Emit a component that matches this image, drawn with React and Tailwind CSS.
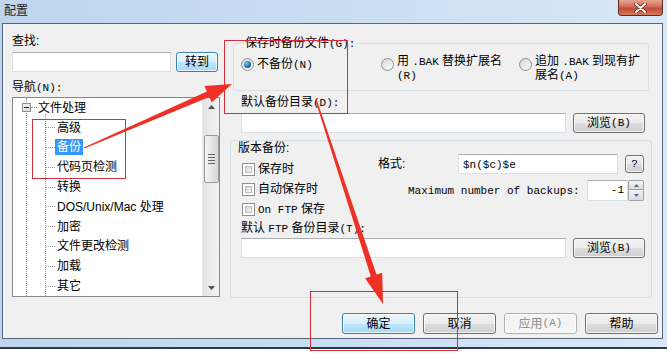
import React from "react";

const M = ({ children }) => (
  <span className="[font-family:Liberation_Mono,monospace] text-[11px]">{children}</span>
);

function Btn({ children, className = "", kind = "normal" }) {
  const k =
    kind === "blue"
      ? "border-[#3c7fb1] bg-[linear-gradient(#eaf6fd,#d9f0fc_50%,#bee6fd_50%,#a7d9f5)]"
      : kind === "disabled"
      ? "border-[#adb2b5] bg-[#f4f4f4] text-[#8a8a8a]"
      : "border-[#707070] bg-[linear-gradient(#f2f2f2,#ebebeb_50%,#dddddd_50%,#cfcfcf)]";
  return (
    <div
      className={`flex items-center justify-center rounded-[3px] border shadow-[inset_0_0_0_1px_rgba(255,255,255,0.75)] leading-none shrink-0 ${k} ${className}`}
    >
      {children}
    </div>
  );
}

const Check = () => (
  <div className="w-[13px] h-[13px] border border-[#8e8f8f] bg-white p-[2px] shrink-0">
    <div className="w-full h-full border border-[#b8bbbf] bg-[linear-gradient(135deg,#cfd2d7,#fbfbfb)]" />
  </div>
);

const Radio = ({ checked }) => (
  <div className="w-[13px] h-[13px] rounded-full border border-[#8e8f8f] bg-[linear-gradient(135deg,#d2d5da,#fdfdfd)] flex items-center justify-center shrink-0">
    {checked && (
      <div className="w-[7px] h-[7px] rounded-full bg-[radial-gradient(circle_at_35%_35%,#7cc7ef,#1c6aa3_60%,#0b456f)]" />
    )}
  </div>
);

const Input = ({ className = "", children }) => (
  <div
    className={`h-[20px] border border-[#dbdfe6] border-t-[#abadb3] bg-white flex items-center shrink-0 ${className}`}
  >
    {children}
  </div>
);

const treeChildren = [
  "高级",
  "备份",
  "代码页检测",
  "转换",
  "DOS/Unix/Mac 处理",
  "加密",
  "文件更改检测",
  "加载",
  "其它",
];

const Tri = ({ down }) => (
  <svg width="7" height="4" viewBox="0 0 7 4">
    {down ? (
      <polygon points="0,0 7,0 3.5,4" fill="#505050" />
    ) : (
      <polygon points="0,4 7,4 3.5,0" fill="#505050" />
    )}
  </svg>
);

export default function App() {
  return (
    <div className="relative w-[667px] h-[359px] bg-white overflow-hidden [font-family:Liberation_Sans,Noto_Sans_CJK_SC,sans-serif] text-[12px] text-black">
      <div className="w-[667px] h-[349px] border-b-2 border-[#2f3a46] bg-[linear-gradient(90deg,#bed5ed,#cadef2_50%,#d8e7f6)] flex flex-col">
        {/* title bar */}
        <div className="h-[23px] flex items-start justify-between shrink-0">
          <div className="pl-[4px] pt-[4px] text-[12px] leading-[14px] text-[#1e1e1e]">配置</div>
          <div className="mr-[4px] w-[45px] h-[16px] rounded-b-[4px] border border-t-0 border-[#5b2a22] bg-[linear-gradient(#e8a493,#d06a55_45%,#c14a34_55%,#d87a5f)] flex items-center justify-center">
            <svg width="13" height="10" viewBox="0 0 13 10">
              <path d="M2 1 L11 9 M11 1 L2 9" stroke="#6b2a20" strokeWidth="3.6" strokeLinecap="round" />
              <path d="M2 1 L11 9 M11 1 L2 9" stroke="#ffffff" strokeWidth="2" strokeLinecap="round" />
            </svg>
          </div>
        </div>

        {/* content */}
        <div className="ml-[2px] mr-[4px] h-[316px] border border-[#56677b] bg-[#f0f0f0] flex flex-col">
          <div className="flex items-start">
            {/* left column */}
            <div className="ml-[9px] w-[208px] flex flex-col">
              <div className="mt-[10px] h-[14px] leading-[14px]">查找:</div>
              <div className="mt-[4px] h-[20px] flex">
                <Input className="w-[159px]" />
                <Btn kind="blue" className="ml-[5px] w-[42px] h-[20px]">转到</Btn>
              </div>
              <div className="mt-[8px] h-[14px] leading-[14px]">
                导航<M>(N):</M>
              </div>
              <div className="mt-[3px] w-[208px] h-[200px] border border-[#828790] bg-white flex">
                <div className="relative flex-1 flex flex-col">
                  <div className="absolute left-[13px] top-0 bottom-0 border-l border-dotted border-[#9a9a9a]" />
                  <div className="absolute left-[32px] top-[16px] bottom-0 border-l border-dotted border-[#9a9a9a]" />
                  <div className="h-[20px] flex items-center pl-[9px]">
                    <div className="relative w-[9px] h-[9px] border border-[#8f8f8f] bg-[linear-gradient(135deg,#f4f4f4,#d8d8d8)] flex items-center justify-center">
                      <div className="w-[5px] h-px bg-[#222]" />
                    </div>
                    <div className="w-[6px] border-t border-dotted border-[#9a9a9a]" />
                    <span className="ml-[1px] leading-[16px]">文件处理</span>
                  </div>
                  {treeChildren.map((t) => (
                    <div key={t} className="h-[20px] flex items-center pl-[33px]">
                      <div className="w-[9px] border-t border-dotted border-[#9a9a9a]" />
                      <span
                        className={
                          t === "备份"
                            ? "px-[2px] leading-[16px] bg-[#3399ff] text-white"
                            : "px-[2px] leading-[16px]"
                        }
                      >
                        {t}
                      </span>
                    </div>
                  ))}
                </div>
                {/* scrollbar */}
                <div className="w-[17px] h-full bg-[linear-gradient(90deg,#e3e3e3,#f2f2f2)] border-l border-[#e9e9e9] flex flex-col items-center">
                  <div className="h-[17px] flex items-center justify-center">
                    <Tri />
                  </div>
                  <div className="mt-[20px] w-[15px] h-[48px] rounded-[2px] border border-[#999] bg-[linear-gradient(90deg,#f5f5f5,#e5e5e5_50%,#d5d5d5)] flex flex-col items-center justify-center gap-[2px]">
                    <div className="w-[7px] h-px bg-[#666]" />
                    <div className="w-[7px] h-px bg-[#666]" />
                    <div className="w-[7px] h-px bg-[#666]" />
                    <div className="w-[7px] h-px bg-[#666]" />
                  </div>
                  <div className="mt-auto h-[17px] flex items-center justify-center">
                    <Tri down />
                  </div>
                </div>
              </div>
            </div>

            {/* right column */}
            <div className="ml-[10px] w-[422px] flex flex-col">
              {/* group 1 */}
              <div className="mt-[19px] ml-[3px] w-[416px] h-[48px] border border-[#d5dfe5] rounded-[3px] flex flex-col">
                <div className="-mt-[7px] ml-[10px] px-[1px] w-fit h-[12px] leading-[12px] bg-[#f0f0f0]">
                  保存时备份文件<M>(G):</M>
                </div>
                <div className="mt-[6px] flex items-start">
                  <div className="ml-[7px] w-[140px] mt-[3px] h-[13px] flex items-center">
                    <Radio checked />
                    <span className="ml-[3px] leading-[13px]">
                      不备份<M>(N)</M>
                    </span>
                  </div>
                  <div className="w-[138px] flex items-start">
                    <div className="mt-[3px]">
                      <Radio />
                    </div>
                    <div className="ml-[3px] leading-[13px]">
                      用 <M>.BAK</M> 替换扩展名
                      <br />
                      <M>(R)</M>
                    </div>
                  </div>
                  <div className="flex items-start">
                    <div className="mt-[3px]">
                      <Radio />
                    </div>
                    <div className="ml-[3px] leading-[13px]">
                      追加 <M>.BAK</M> 到现有扩
                      <br />
                      展名<M>(A)</M>
                    </div>
                  </div>
                </div>
              </div>

              <div className="mt-[5px] ml-[11px] h-[12px] leading-[12px]">
                默认备份目录<M>(D):</M>
              </div>
              <div className="mt-[5px] ml-[11px] flex">
                <Input className="w-[325px]" />
                <Btn className="ml-[7px] w-[72px] h-[20px]">
                  浏览<M>(B)</M>
                </Btn>
              </div>

              {/* group 2 */}
              <div className="mt-[7px] w-[422px] h-[158px] border border-[#d5dfe5] rounded-[3px] flex flex-col">
                <div className="mt-[1px] ml-[7px] h-[12px] leading-[12px]">版本备份:</div>
                <div className="flex items-start">
                  <div className="ml-[11px] w-[136px] pt-[8px] flex flex-col gap-[6px]">
                    <div className="h-[14px] flex items-center">
                      <Check />
                      <span className="ml-[3px] leading-[14px]">保存时</span>
                    </div>
                    <div className="h-[14px] flex items-center">
                      <Check />
                      <span className="ml-[3px] leading-[14px]">自动保存时</span>
                    </div>
                    <div className="h-[14px] flex items-center">
                      <Check />
                      <span className="ml-[3px] leading-[14px]">
                        <M>On FTP</M> 保存
                      </span>
                    </div>
                  </div>
                  <div className="flex flex-col">
                    <div className="flex items-center h-[20px]">
                      <div className="w-[80px] leading-[14px]">格式:</div>
                      <Input className="w-[160px]">
                        <span className="pl-[4px]">
                          <M>$n($c)$e</M>
                        </span>
                      </Input>
                      <Btn className="ml-[7px] w-[19px] h-[18px]">
                        <M>?</M>
                      </Btn>
                    </div>
                    <div className="mt-[6px] flex items-center h-[21px]">
                      <div className="ml-[30px] w-[179px] leading-[14px]">
                        <M>Maximum number of backups:</M>
                      </div>
                      <Input className="w-[41px] h-[21px] justify-end pr-[3px]">
                        <M>-1</M>
                      </Input>
                      <div className="w-[16px] h-[21px] flex flex-col">
                        <div className="h-[10px] border border-[#a0a0a0] rounded-t-[2px] bg-[linear-gradient(#f4f4f4,#dcdcdc)] flex items-center justify-center">
                          <svg width="5" height="3" viewBox="0 0 5 3">
                            <polygon points="0,3 5,3 2.5,0" fill="#4a6a8a" />
                          </svg>
                        </div>
                        <div className="h-[11px] border border-t-0 border-[#a0a0a0] rounded-b-[2px] bg-[linear-gradient(#f4f4f4,#dcdcdc)] flex items-center justify-center">
                          <svg width="5" height="3" viewBox="0 0 5 3">
                            <polygon points="0,0 5,0 2.5,3" fill="#4a6a8a" />
                          </svg>
                        </div>
                      </div>
                    </div>
                  </div>
                </div>
                <div className="mt-[6px] ml-[10px] h-[12px] leading-[12px]">
                  默认 <M>FTP</M> 备份目录<M>(T):</M>
                </div>
                <div className="mt-[4px] ml-[10px] flex">
                  <Input className="w-[325px]" />
                  <Btn className="ml-[7px] w-[72px] h-[20px]">
                    浏览<M>(B)</M>
                  </Btn>
                </div>
              </div>
            </div>
          </div>

          {/* bottom buttons */}
          <div className="mt-[15px] flex justify-end gap-[8px] pr-[4px]">
            <Btn kind="blue" className="w-[73px] h-[21px]">确定</Btn>
            <Btn className="w-[73px] h-[21px]">取消</Btn>
            <Btn kind="disabled" className="w-[73px] h-[21px]">
              应用<M>(A)</M>
            </Btn>
            <Btn className="w-[73px] h-[21px]">帮助</Btn>
          </div>
        </div>
      </div>

      {/* annotations */}
      <svg className="absolute left-0 top-0 pointer-events-none" width="667" height="359" viewBox="0 0 667 359">
        <rect x="32.5" y="119.5" width="93" height="59" fill="none" stroke="#d42f3b" strokeWidth="1" />
        <rect x="224.5" y="40.5" width="123" height="73" fill="none" stroke="#d42f3b" strokeWidth="1" />
        <rect x="310.5" y="291.5" width="147" height="59" fill="none" stroke="#d42f3b" strokeWidth="1" />
        <polygon
          points="83.7,147.4 206.9,91.6 204.5,86.0 232,84 211.7,102.6 209.3,97.1 84.3,148.6"
          fill="#ee3124"
        />
        <polygon
          points="315.3,100.2 370.8,276.4 365.1,278.3 383,304 382.2,272.7 376.5,274.6 316.7,99.8"
          fill="#ee3124"
        />
      </svg>
    </div>
  );
}
